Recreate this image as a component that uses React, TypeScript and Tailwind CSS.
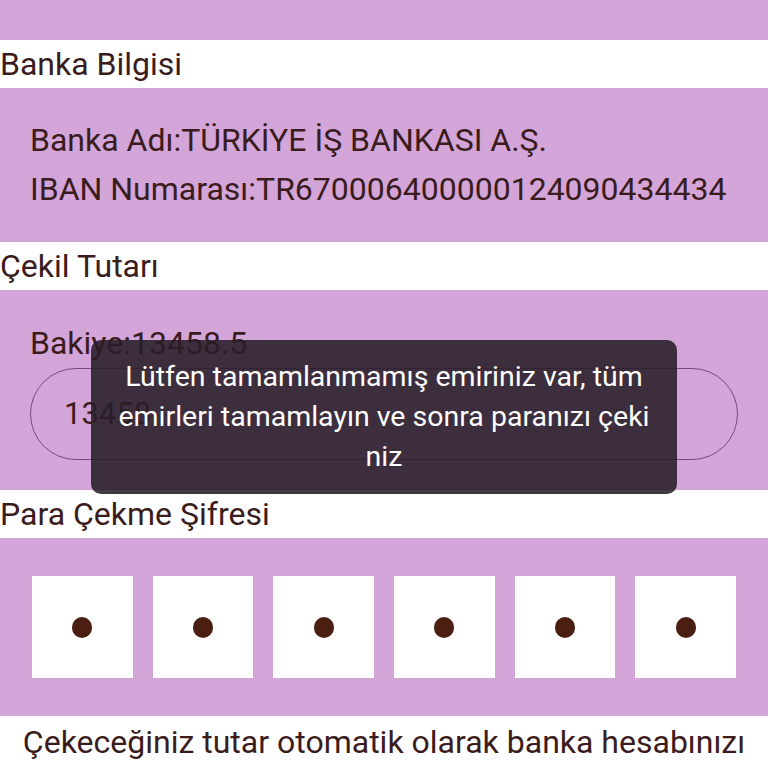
import React from 'react';

const font = { fontFamily: 'Roboto, "Noto Sans", sans-serif' };

const SectionHeader: React.FC<{ title: string }> = ({ title }) => (
  <div className="h-[48px] flex items-center bg-white text-[32px] leading-[48px] text-[#3a1c1c]">
    {title}
  </div>
);

export default function App() {
  const pins = [0, 1, 2, 3, 4, 5];

  return (
    <div className="relative w-[768px] h-[768px] overflow-hidden bg-white" style={font}>
      {/* top bar */}
      <div className="h-[40px] bg-[#d4a5d8]"></div>

      <SectionHeader title="Banka Bilgisi" />
      <div className="h-[154px] bg-[#d4a5d8] px-[30px] pt-[28px] text-[32px] leading-[49px] text-[#3a1c1c] whitespace-nowrap">
        <div>Banka Adı:TÜRKİYE İŞ BANKASI A.Ş.</div>
        <div>IBAN Numarası:TR670006400000124090434434</div>
      </div>

      <SectionHeader title="Çekil Tutarı" />
      <div className="h-[200px] bg-[#d4a5d8] px-[30px] pt-[34px]">
        <div className="text-[32px] leading-[38px] text-[#3a1c1c]">Bakiye:13458.5</div>
        <div className="mt-[6px] h-[92px] rounded-full border border-[#7b4a80] flex items-center px-[33px] text-[31px] text-[#3a1c1c]">
          13458
        </div>
      </div>

      <SectionHeader title="Para Çekme Şifresi" />
      <div className="h-[178px] bg-[#d4a5d8] flex items-center gap-[20px] px-[32px]">
        {pins.map((i) => (
          <div key={i} className="flex-1 h-[102px] bg-white flex items-center justify-center">
            <span className="block w-[20px] h-[21px] rounded-full bg-[#4a1f12]"></span>
          </div>
        ))}
      </div>

      <div className="h-[52px] flex items-center justify-center text-[32px] text-[#3a1c1c] whitespace-nowrap">
        Çekeceğiniz tutar otomatik olarak banka hesabınızı
      </div>

      {/* toast */}
      <div className="absolute left-[91px] top-[340px] w-[586px] h-[154px] rounded-[10px] bg-[rgba(40,30,40,0.88)] flex items-center justify-center px-[20px]">
        <p className="text-center text-white text-[28.5px] leading-[40px]">
          Lütfen tamamlanmamış emiriniz var, tüm emirleri tamamlayın ve sonra paranızı çeki niz
        </p>
      </div>
    </div>
  );
}
